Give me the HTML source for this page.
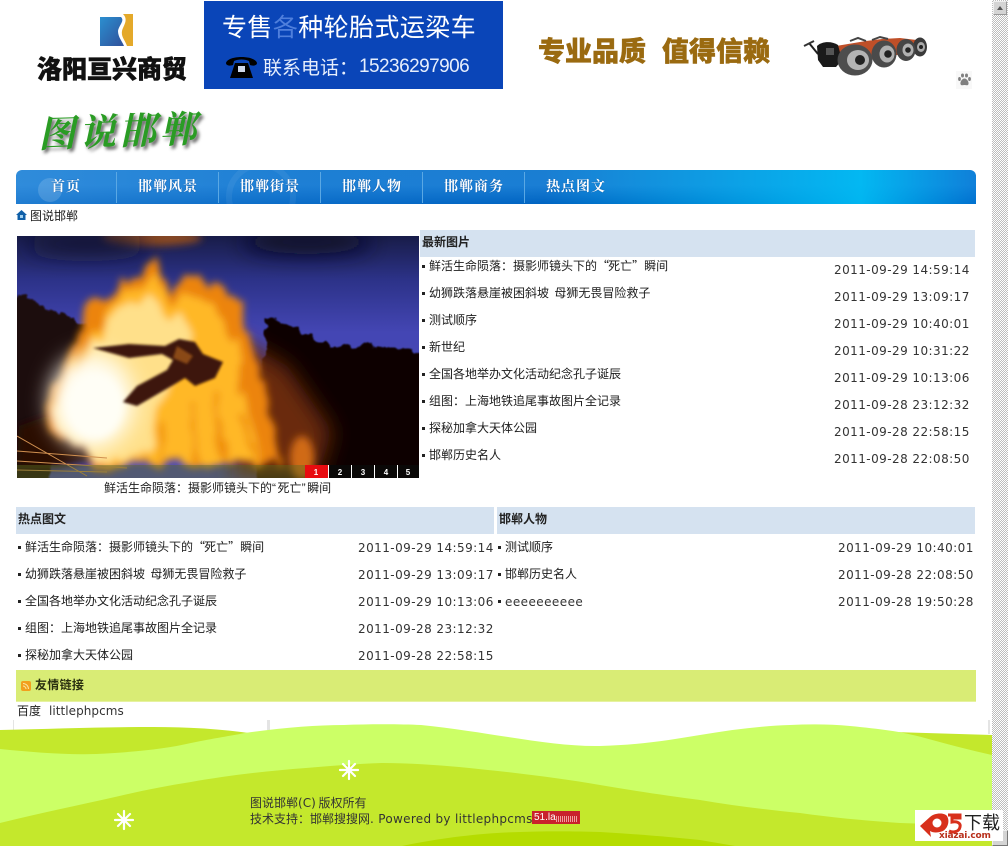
<!DOCTYPE html>
<html lang="zh-CN"><head><meta charset="utf-8"><title>图说邯郸</title>
<style>
html,body{margin:0;padding:0;background:#fff;width:1008px;height:846px;overflow:hidden}
body{position:relative;font:12px/14px "Noto Sans CJK SC","WenQuanYi Zen Hei","Liberation Sans",sans-serif;color:#1c1c1c}
.a{position:absolute;white-space:nowrap}
.d{position:absolute;white-space:nowrap;font:12px/14px "DejaVu Sans",sans-serif;letter-spacing:.44px;color:#333}
.b{position:absolute;width:3px;height:3px;background:#222}
.h{position:absolute;background:#d5e2f0;font-weight:700;color:#222;box-sizing:border-box;padding-left:2px}
.n{position:absolute;top:178px;color:#fff;font:700 14px/16px "Noto Serif CJK SC","Noto Sans CJK SC",serif;letter-spacing:1px;text-shadow:0 0 1px #0a4a90}
.s{position:absolute;top:172px;width:1px;height:31px;background:#5aa8e4}
.c{font-family:"Noto Sans CJK TC",sans-serif;font-style:normal}
.o{letter-spacing:-1px}
svg{position:absolute}
</style></head><body>

<!-- top logo -->
<svg style="left:98px;top:12px" width="38" height="36" viewBox="0 0 38 36">
<defs><linearGradient id="lg" x1="0" y1="0" x2="1" y2="1"><stop offset="0" stop-color="#2b8fd0"/><stop offset="1" stop-color="#30509a"/></linearGradient></defs>
<path d="M2 5H23C27 9 21 13 20 19C20 25 24 29 26 34H2Z" fill="url(#lg)"/>
<path d="M25 2H35V34H29C27 28 23 25 24 19C25 14 31 8 25 2Z" fill="#e4a92a"/>
</svg>
<div class="a" style="left:37px;top:53px;font:900 25px/30px 'Noto Sans CJK SC',sans-serif;color:#111;-webkit-text-stroke:.6px #111">洛阳亘兴商贸</div>

<!-- blue banner -->
<div class="a" style="left:204px;top:1px;width:299px;height:88px;background:#0a45b8"></div>
<div class="a" style="left:222px;top:8px;font:400 25px/36px 'Noto Sans CJK SC',sans-serif;color:#fff;letter-spacing:.4px">专售<span style="color:#4f7fdc">各</span>种轮胎式运梁车</div>
<svg style="left:225px;top:54px" width="33" height="25" viewBox="0 0 33 25">
<path d="M1 9C3 1 30 1 32 9C32 12 27 12 25 11L24 7C20 5 13 5 9 7L8 11C6 12 1 12 1 9Z" fill="#000"/>
<path d="M10 9H23L28 24H5Z" fill="#000"/>
<rect x="13" y="12" width="7" height="6" fill="#cfd8ea"/>
</svg>
<div class="a" style="left:263px;top:53px;font:400 19px/28px 'Noto Sans CJK SC',sans-serif;color:#e6eefc">联系电话<span class="c">：</span></div>
<div class="a" style="left:359px;top:53px;font:400 19px/28px 'Liberation Sans',sans-serif;color:#e6eefc;letter-spacing:-.55px">15236297906</div>

<!-- right slogan -->
<div class="a" style="left:538px;top:31px;font:900 27px/38px 'Noto Sans CJK SC',sans-serif;color:#9a6a10;-webkit-text-stroke:.5px #9a6a10">专业品质</div>
<div class="a" style="left:662px;top:31px;font:900 27px/38px 'Noto Sans CJK SC',sans-serif;color:#9a6a10;-webkit-text-stroke:.5px #9a6a10">值得信赖</div>

<!-- truck -->
<svg style="left:800px;top:30px" width="135" height="52" viewBox="800 30 135 52">
<path d="M836 46L866 41L882 39L900 38L925 41L925 48L885 58L840 62Z" fill="#bf4f28"/>
<path d="M850 41L858 38L866 41M872 40L880 37L888 39" stroke="#444" stroke-width="2" fill="none"/>
<path d="M809 43L818 54" stroke="#222" stroke-width="2"/>
<path d="M804 46L814 41" stroke="#333" stroke-width="2"/>
<path d="M817 46C822 41 832 41 838 45L842 60L836 67L823 67L818 60Z" fill="#1a1a1a"/>
<rect x="826" y="48" width="8" height="7" fill="#555"/>
<ellipse cx="920" cy="47" rx="7" ry="9.5" fill="#3a3a3a"/><ellipse cx="921" cy="47" rx="4" ry="5" fill="#aaa"/><circle cx="921" cy="47" r="2" fill="#222"/>
<ellipse cx="906" cy="50" rx="9.5" ry="11" fill="#454545"/><ellipse cx="908" cy="50" rx="5.5" ry="6.5" fill="#b0b0b0"/><circle cx="908" cy="50" r="2.8" fill="#222"/>
<ellipse cx="884" cy="54" rx="12.5" ry="13.5" fill="#4a4a4a"/><ellipse cx="887" cy="54" rx="7.5" ry="8.5" fill="#b0b0b0"/><circle cx="888" cy="54" r="3.8" fill="#222"/>
<ellipse cx="855" cy="60" rx="17.5" ry="15.5" fill="#4d4d4d"/><ellipse cx="858" cy="60" rx="11" ry="10" fill="#b4b4b4"/><circle cx="860" cy="60" r="5" fill="#222"/>
</svg>

<!-- paw -->
<div class="a" style="left:956px;top:71px;width:16px;height:18px;background:#f8f8f8"></div>
<svg style="left:958px;top:73px" width="13" height="14" viewBox="0 0 13 14" fill="#808080">
<ellipse cx="4.5" cy="2.5" rx="1.5" ry="2"/><ellipse cx="8.5" cy="2.5" rx="1.5" ry="2"/><ellipse cx="1.5" cy="6" rx="1.4" ry="2"/><ellipse cx="11.5" cy="6" rx="1.4" ry="2"/><path d="M6.5 5.5C9 5.5 11 9 10.5 11C10 13 8 12 6.5 12C5 12 3 13 2.5 11C2 9 4 5.5 6.5 5.5Z"/>
</svg>

<!-- calligraphy title -->
<div class="a" style="left:42px;top:106px;font:700 37px/50px 'Noto Serif CJK SC',serif;color:#2a9c24;letter-spacing:3.4px;transform:rotate(-2deg) skewX(-14deg);transform-origin:0 50%;text-shadow:3px 3px 3px #666">图说邯郸</div>

<!-- nav -->
<div class="a" style="left:16px;top:170px;width:960px;height:34px;border-radius:6px 6px 0 0;overflow:hidden;background:linear-gradient(90deg,rgba(80,160,230,.4) 0,rgba(40,130,215,.25) 30%,rgba(0,100,210,0) 55%,rgba(0,190,245,.9) 88%,rgba(0,130,225,.4) 100%),linear-gradient(180deg,#1a7ed2 0,#1a7ed4 45%,#0064c2 100%)">
<div style="position:absolute;left:22px;top:8px;width:24px;height:24px;border-radius:50%;background:rgba(255,255,255,.15)"></div>
<div style="position:absolute;left:210px;top:-8px;width:70px;height:70px;border-radius:50%;border:6px solid rgba(255,255,255,.06);box-sizing:border-box"></div>
</div>
<div class="s" style="left:116px"></div><div class="s" style="left:218px"></div><div class="s" style="left:320px"></div><div class="s" style="left:422px"></div><div class="s" style="left:524px"></div>
<div class="n" style="left:51px">首页</div>
<div class="n" style="left:138px">邯郸风景</div>
<div class="n" style="left:240px">邯郸街景</div>
<div class="n" style="left:342px">邯郸人物</div>
<div class="n" style="left:444px">邯郸商务</div>
<div class="n" style="left:546px">热点图文</div>

<!-- breadcrumb -->
<svg style="left:16px;top:210px" width="11" height="10" viewBox="0 0 11 10"><path d="M5.5 0L11 5L9.5 5V10H1.5V5H0Z" fill="#0f5fa8"/><rect x="4" y="5" width="3" height="3" fill="#9fd0f0"/></svg>
<div class="a" style="left:30px;top:209px">图说邯郸</div>

<!-- photo -->
<svg style="left:17px;top:236px" width="402" height="242" viewBox="0 0 402 242">
<defs>
<linearGradient id="sky" x1="0" y1="0" x2="0" y2="1"><stop offset="0" stop-color="#181c48"/><stop offset=".18" stop-color="#2c3288"/><stop offset=".4" stop-color="#4446b4"/><stop offset="1" stop-color="#4c4cb8"/></linearGradient>
<filter id="b1" filterUnits="userSpaceOnUse" x="-40" y="-40" width="482" height="322"><feGaussianBlur stdDeviation="4"/></filter>
<filter id="b2" filterUnits="userSpaceOnUse" x="-40" y="-40" width="482" height="322"><feGaussianBlur stdDeviation="11"/></filter>
<filter id="b3" filterUnits="userSpaceOnUse" x="-40" y="-40" width="482" height="322"><feGaussianBlur stdDeviation="1.4"/></filter>
<filter id="flame" filterUnits="userSpaceOnUse" x="-40" y="-40" width="482" height="322"><feTurbulence type="fractalNoise" baseFrequency="0.05 0.015" numOctaves="3" seed="7" result="n"/><feDisplacementMap in="SourceGraphic" in2="n" scale="30" xChannelSelector="R" yChannelSelector="G"/><feGaussianBlur stdDeviation="3.6"/></filter>
<filter id="leaf" filterUnits="userSpaceOnUse" x="-40" y="-40" width="482" height="322"><feTurbulence type="fractalNoise" baseFrequency="0.09" numOctaves="3" seed="3" result="n"/><feDisplacementMap in="SourceGraphic" in2="n" scale="14" xChannelSelector="R" yChannelSelector="G"/><feGaussianBlur stdDeviation=".8"/></filter>
</defs>
<rect width="402" height="242" fill="url(#sky)"/>
<ellipse cx="135" cy="2" rx="50" ry="8" fill="#8a4a20" filter="url(#b1)"/>
<ellipse cx="70" cy="8" rx="60" ry="10" fill="#141530" filter="url(#b2)"/>
<ellipse cx="290" cy="6" rx="65" ry="12" fill="#0c0e28" filter="url(#b2)"/>
<path d="M-30 68L10 60L22 72L50 78L78 95L88 112L60 135L40 170L30 270H-30Z" fill="#1e0a08" filter="url(#leaf)"/>
<path d="M250 82L268 88L295 100L320 112L345 108L370 112L440 118V270H240Z" fill="#0b0504" filter="url(#leaf)"/>
<path d="M215 100L270 130L315 195L300 242H215Z" fill="#6a2c10" filter="url(#b2)"/>
<path d="M2 190L30 180L70 195L90 222L40 232H0Z" fill="#2a0e06" filter="url(#b1)"/>
<g filter="url(#flame)">
<path d="M23 165L45 135L68 95L76 62L100 56L118 44L143 24L158 50L190 46L223 66L235 110L250 160L264 230H85L60 208L30 195Z" fill="#ec8410"/>
<path d="M38 168L58 130L85 90L92 68L118 56L145 40L160 66L188 62L212 84L222 120L232 170L240 228H95L55 200Z" fill="#ffb826"/>
<path d="M38 172L70 125L98 76L135 60L160 85L178 90L170 120L140 170L130 222H85L50 200Z" fill="#ffe08a"/>
<path d="M150 180L148 226M175 170L176 226M200 160L204 226M225 175L232 226" stroke="#f09010" stroke-width="7" fill="none"/>
</g>
<ellipse cx="75" cy="165" rx="42" ry="48" fill="#fffdf2" filter="url(#b2)"/>
<ellipse cx="78" cy="170" rx="28" ry="32" fill="#fffef6" filter="url(#b1)"/>
<ellipse cx="285" cy="222" rx="12" ry="22" fill="#d06a14" filter="url(#b1)"/>
<path d="M76 112L112 108L148 110L162 103L178 106L186 118L206 126L198 142L178 150L168 142L158 148L120 170L106 166L120 150L150 134L156 124L145 118L112 122Z" fill="#3c1608" filter="url(#b3)"/>
<path d="M160 110L176 120L170 128L156 122Z" fill="#8a4a18" filter="url(#b3)"/>
<path d="M0 200L70 240M0 215L90 222M0 225L110 232M0 234L90 236" stroke="#d09050" stroke-width="1" fill="none"/>
<rect y="229" width="288" height="13" fill="#5a6a20" opacity=".45"/>
<rect x="288" y="229" width="23" height="13" fill="#e80c10"/>
<rect x="311" y="229" width="91" height="13" fill="#0a0807"/>
<path d="M311.5 229V242M334.5 229V242M357.5 229V242M380.5 229V242" stroke="#fff"/>
<g fill="#fff" font-family="Liberation Sans" font-size="8" font-weight="700" text-anchor="middle">
<text x="299" y="239">1</text><text x="323" y="239">2</text><text x="346" y="239">3</text><text x="369" y="239">4</text><text x="391" y="239">5</text>
</g>
</svg>
<div class="a" style="left:104px;top:481px">鲜活生命陨落<span class="c">：</span>摄影师镜头下的<span style="font-family:'Liberation Sans';letter-spacing:1.5px">“</span>死亡<span style="font-family:'Liberation Sans';letter-spacing:1.5px">”</span>瞬间</div>

<!-- latest -->
<div class="h" style="left:420px;top:230px;width:555px;height:27px;line-height:24px">最新图片</div>
<div class="b" style="left:422px;top:265px"></div><div class="a" style="left:429px;top:259px">鲜活生命陨落<span class="c">：</span>摄影师镜头下的<span class="o">“</span>死亡”瞬间</div><div class="d" style="left:834px;top:263px">2011-09-29 14:59:14</div>
<div class="b" style="left:422px;top:292px"></div><div class="a" style="left:429px;top:286px">幼狮跌落悬崖被困斜坡&nbsp; 母狮无畏冒险救子</div><div class="d" style="left:834px;top:290px">2011-09-29 13:09:17</div>
<div class="b" style="left:422px;top:319px"></div><div class="a" style="left:429px;top:313px">测试顺序</div><div class="d" style="left:834px;top:317px">2011-09-29 10:40:01</div>
<div class="b" style="left:422px;top:346px"></div><div class="a" style="left:429px;top:340px">新世纪</div><div class="d" style="left:834px;top:344px">2011-09-29 10:31:22</div>
<div class="b" style="left:422px;top:373px"></div><div class="a" style="left:429px;top:367px">全国各地举办文化活动纪念孔子诞辰</div><div class="d" style="left:834px;top:371px">2011-09-29 10:13:06</div>
<div class="b" style="left:422px;top:400px"></div><div class="a" style="left:429px;top:394px">组图<span class="c">：</span>上海地铁追尾事故图片全记录</div><div class="d" style="left:834px;top:398px">2011-09-28 23:12:32</div>
<div class="b" style="left:422px;top:427px"></div><div class="a" style="left:429px;top:421px">探秘加拿大天体公园</div><div class="d" style="left:834px;top:425px">2011-09-28 22:58:15</div>
<div class="b" style="left:422px;top:454px"></div><div class="a" style="left:429px;top:448px">邯郸历史名人</div><div class="d" style="left:834px;top:452px">2011-09-28 22:08:50</div>

<!-- hot -->
<div class="h" style="left:16px;top:507px;width:478px;height:27px;line-height:24px">热点图文</div>
<div class="b" style="left:18px;top:546px"></div><div class="a" style="left:25px;top:540px">鲜活生命陨落<span class="c">：</span>摄影师镜头下的<span class="o">“</span>死亡”瞬间</div><div class="d" style="left:358px;top:541px">2011-09-29 14:59:14</div>
<div class="b" style="left:18px;top:573px"></div><div class="a" style="left:25px;top:567px">幼狮跌落悬崖被困斜坡&nbsp; 母狮无畏冒险救子</div><div class="d" style="left:358px;top:568px">2011-09-29 13:09:17</div>
<div class="b" style="left:18px;top:600px"></div><div class="a" style="left:25px;top:594px">全国各地举办文化活动纪念孔子诞辰</div><div class="d" style="left:358px;top:595px">2011-09-29 10:13:06</div>
<div class="b" style="left:18px;top:627px"></div><div class="a" style="left:25px;top:621px">组图<span class="c">：</span>上海地铁追尾事故图片全记录</div><div class="d" style="left:358px;top:622px">2011-09-28 23:12:32</div>
<div class="b" style="left:18px;top:654px"></div><div class="a" style="left:25px;top:648px">探秘加拿大天体公园</div><div class="d" style="left:358px;top:649px">2011-09-28 22:58:15</div>

<!-- people -->
<div class="h" style="left:497px;top:507px;width:478px;height:27px;line-height:24px">邯郸人物</div>
<div class="b" style="left:498px;top:546px"></div><div class="a" style="left:505px;top:540px">测试顺序</div><div class="d" style="left:838px;top:541px">2011-09-29 10:40:01</div>
<div class="b" style="left:498px;top:573px"></div><div class="a" style="left:505px;top:567px">邯郸历史名人</div><div class="d" style="left:838px;top:568px">2011-09-28 22:08:50</div>
<div class="b" style="left:498px;top:600px"></div><div class="d" style="left:505px;top:595px">eeeeeeeeee</div><div class="d" style="left:838px;top:595px">2011-09-28 19:50:28</div>

<!-- links -->
<div class="a" style="left:16px;top:670px;width:960px;height:32px;background:#d9ec75;border-bottom:1px solid #e6f2a0;box-sizing:border-box"></div>
<svg style="left:21px;top:681px" width="10" height="10" viewBox="0 0 10 10"><rect width="10" height="10" rx="2" fill="#f2a01e"/><path d="M2 2.5C5 2.5 7.5 5 7.5 8M2 5C3.5 5 5 6.5 5 8" stroke="#fbe6a0" fill="none"/></svg>
<div class="a" style="left:35px;top:678px;font-weight:700;color:#2a3010;letter-spacing:.3px">友情链接</div>
<div class="a" style="left:17px;top:704px">百度</div>
<div class="d" style="left:49px;top:704px;letter-spacing:.05px">littlephpcms</div>

<!-- footer -->
<div class="a" style="left:13px;top:720px;width:1px;height:12px;background:#e4e4e4"></div>
<div class="a" style="left:267px;top:720px;width:3px;height:10px;background:#e4e4e4"></div>
<div class="a" style="left:988px;top:720px;width:2px;height:14px;background:#e4e4e4"></div>
<svg style="left:0;top:720px" width="992" height="126" viewBox="0 720 992 126">
<path d="M0 730C50 729 100 727 153 727C190 727 225 729 262 735V765H0Z" fill="#c4e82c"/>
<path d="M860 731L992 735V765H860Z" fill="#c4e82c"/>
<path d="M0 749C30 752 65 755 96 754C135 752 165 749 191 743C215 738 230 736 245 733C280 728 315 725 344 725C370 724 400 724 421 725C490 732 550 747 600 746C640 745 670 740 700 735C730 730 760 726 790 725C810 724 830 724 850 726C880 729 900 731 925 738C950 745 970 750 992 755V846H0Z" fill="#ccff66"/>
<path d="M0 823C40 813 80 805 115 797C140 791 165 786 191 782C225 776 265 771 306 768C330 766 355 764 382 763C410 763 435 765 459 767C510 772 560 778 600 785C635 791 670 796 700 800C735 806 770 810 800 813C835 818 870 821 900 823L992 826V846H0Z" fill="#c4e82c"/>
<path d="M402 846C430 840 465 835 497 833C530 831 570 831 600 832C635 834 670 837 700 840L735 846Z" fill="#b5dc00"/>
<g stroke="#fff" stroke-linecap="round" stroke-width="2.2">
<path d="M124 811V829M115 820H133M118 814L130 826M130 814L118 826"/>
<path d="M349 761V779M340 770H358M343 764L355 776M355 764L343 776"/>
</g>
</svg>
<div class="a" style="left:250px;top:796px;color:#333">图说邯郸<span style="font-family:'DejaVu Sans',sans-serif">(C)</span> 版权所有</div>
<div class="a" style="left:250px;top:812px;color:#333">技术支持<span class="c">：</span>邯郸搜搜网<span style="font-family:'DejaVu Sans',sans-serif;letter-spacing:.3px">. Powered by littlephpcms</span></div>
<div class="a" style="left:532px;top:811px;width:48px;height:13px;background:#c9222c;color:#fff;font:400 10px/13px 'Liberation Sans',sans-serif;padding-left:2px;box-sizing:border-box">51.la</div>
<div class="a" style="left:556px;top:816px;width:22px;height:6px;background:repeating-linear-gradient(90deg,#f0a0a0 0 1px,transparent 1px 2px)"></div>

<!-- scrollbar -->
<div class="a" style="left:992px;top:0;width:16px;height:846px;background:repeating-conic-gradient(#bdbdbd 0 25%,#fff 0 50%) 0 0/2px 2px"></div>
<div class="a" style="left:993px;top:1px;width:14px;height:14px;background:#d4d4d4;border:1px solid #999;border-top-color:#eee;border-left-color:#eee;box-sizing:border-box"></div>
<div class="a" style="left:997px;top:6px;width:0;height:0;border:3px solid transparent;border-top:0;border-bottom:4px solid #555"></div>
<div class="a" style="left:992px;top:830px;width:16px;height:16px;background:#d4d4d4;border:1px solid #eee;border-right-color:#777;border-bottom-color:#777;box-sizing:border-box"></div>

<!-- a5 badge -->
<div class="a" style="left:915px;top:810px;width:88px;height:31px;background:#fff"></div>
<svg style="left:919px;top:812px" width="44" height="26" viewBox="0 0 44 26">
<path d="M1 14L11 5C15 1 25 0 28 4C31 9 29 16 24 19C19 21 14 21 11 19L12 25Z" fill="#d8301c"/>
<circle cx="18" cy="11" r="4.5" fill="#fff"/>
<path d="M29 3H41V6H33V10C38 9 42 11 41 15C40 20 34 21 30 19" fill="none" stroke="#d8301c" stroke-width="3"/>
</svg>
<div class="a" style="left:964px;top:811px;font:400 18px/22px 'Noto Sans CJK SC',sans-serif;color:#222">下载</div>
<div class="a" style="left:939px;top:831px;font:700 9px/10px 'DejaVu Sans',sans-serif;color:#b8301c;letter-spacing:-.2px">xiazai.com</div>
</body></html>
